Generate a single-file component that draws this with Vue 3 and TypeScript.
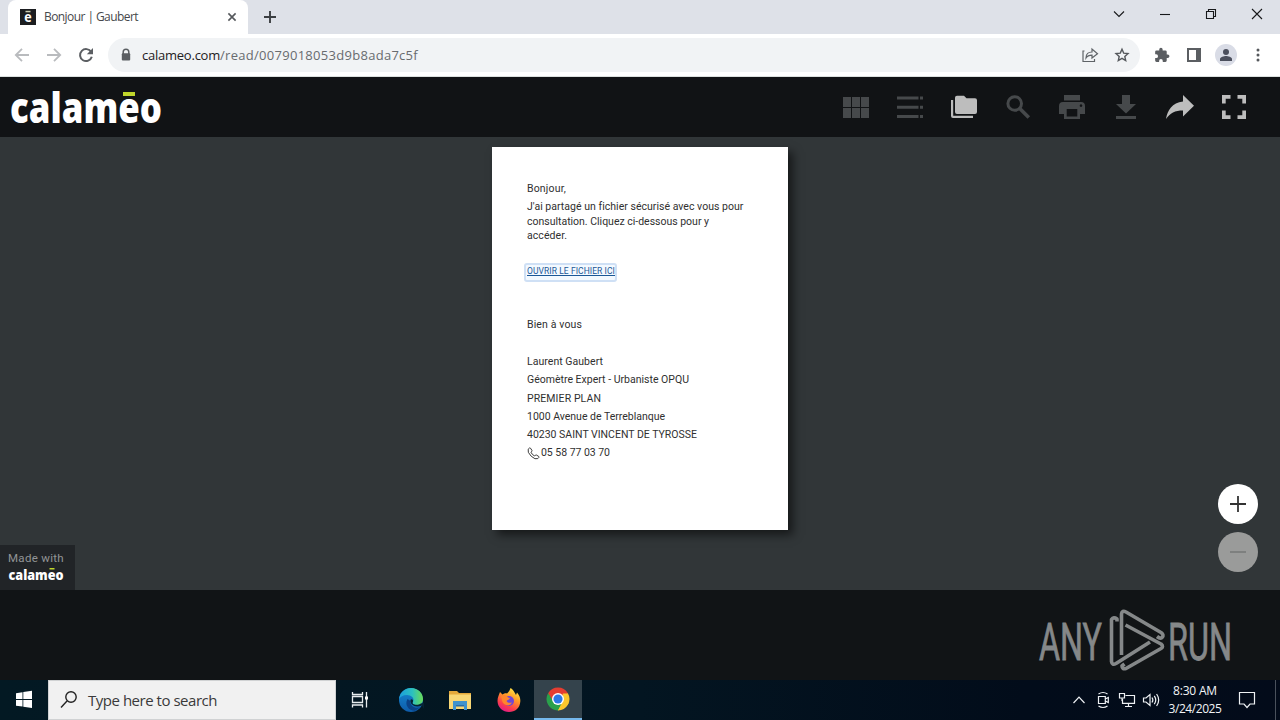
<script setup lang="ts">
import type { Directive } from 'vue'

/* Spreads the letters of a one-line label over the given width in pixels. */
const vFit: Directive<HTMLElement, number> = {
  mounted(el, binding) {
    const natural = el.getBoundingClientRect().width
    const count = (el.textContent ?? '').length
    el.style.letterSpacing = `${(binding.value - natural) / count}px`
  }
}

interface Line { text: string; width: number }

const intro: Line[] = [
  { text: "J'ai partagé un fichier sécurisé avec vous pour", width: 216 },
  { text: 'consultation. Cliquez ci-dessous pour y', width: 182 },
  { text: 'accéder.', width: 40 }
]

const signature: Line[] = [
  { text: 'Laurent Gaubert', width: 76 },
  { text: 'Géomètre Expert - Urbaniste OPQU', width: 162 },
  { text: 'PREMIER PLAN', width: 74 },
  { text: '1000 Avenue de Terreblanque', width: 138 },
  { text: '40230 SAINT VINCENT DE TYROSSE', width: 170 }
]
</script>

<template>
  <div class="screen">
    <header class="tabs">
      <div class="tab">
        <svg class="favicon" width="16" height="16" viewBox="0 0 16 16">
          <rect width="16" height="16" fill="#1b1d20" />
          <rect x="5.500" y="1.800" width="5" height="1.500" fill="#c9cbb0" />
          <text x="4.300" y="13" textLength="7.400" lengthAdjust="spacingAndGlyphs" font-size="14" font-weight="700" fill="#fff">e</text>
        </svg>
        <span class="tab-title"><span v-fit="94">Bonjour | Gaubert</span></span>
        <svg class="tab-close" width="16" height="16" viewBox="-8 -8 16 16"><path d="M-3.6-3.6 3.6 3.6M3.6-3.6-3.6 3.6" stroke="#55585c" stroke-width="1.6" /></svg>
      </div>
      <svg class="new-tab" width="28" height="34" viewBox="-14 -17 28 34"><path d="M-6 0H6M0-6V6" stroke="#3b3e42" stroke-width="1.900" /></svg>
      <div class="window-controls">
        <svg width="46" height="28" viewBox="-23 -14 46 28"><path d="M-5-2.500 0 2.500 5-2.500" /></svg>
        <svg width="46" height="28" viewBox="-23 -14 46 28"><path d="M-5 .5H5" /></svg>
        <svg width="46" height="28" viewBox="-23 -14 46 28"><path d="M-4.500-2.500h7v7h-7zM-2.500-2.500v-2h7v7h-2" /></svg>
        <svg width="46" height="28" viewBox="-23 -14 46 28"><path d="M-5-5 5 5M5-5-5 5" /></svg>
      </div>
    </header>

    <nav class="toolbar">
      <svg class="slot" viewBox="-16 -16 32 32"><path d="M7 0H-6M0-6.2-6.2 0 0 6.2" fill="none" stroke="#b9bbbe" stroke-width="1.8" /></svg>
      <svg class="slot" viewBox="-16 -16 32 32"><path d="M-7 0H6M0-6.2 6.2 0 0 6.2" fill="none" stroke="#b9bbbe" stroke-width="1.8" /></svg>
      <svg class="slot" viewBox="-16 -16 32 32"><path d="M5.2-3A6 6 0 1 0 5.8 1.8" fill="none" stroke="#5b5e62" stroke-width="2" /><path d="M7-7V-.8H.8z" fill="#5b5e62" /></svg>
      <div class="omnibox">
        <svg class="lock" width="16" height="16" viewBox="0 0 16 16"><path d="M5.200 7V5a2.800 2.800 0 0 1 5.600 0v2" fill="none" stroke="#5b5e62" stroke-width="1.500" /><rect x="3.800" y="6.200" width="8.400" height="7.400" rx="1" fill="#5b5e62" /></svg>
        <span class="url"><span v-fit="78" class="host">calameo.com</span><span v-fit="198">/read/0079018053d9b8ada7c5f</span></span>
        <svg class="slot" viewBox="-16 -16 32 32"><path d="M-5.500-4h-1.500V6.500H4.500V4M-4 3c0-4 2.500-6 6-6V-6L7.500-1.300 2 3V.2c-3 0-4.800.8-6 2.800z" fill="none" stroke="#5f6367" stroke-width="1.200" /></svg>
        <svg class="slot" viewBox="-16 -16 32 32"><path d="M0-5.800 1.700-1.900 6-1.500 2.800 1.400 3.700 5.500 0 3.300-3.700 5.500-2.800 1.400-6-1.500-1.700-1.900z" fill="none" stroke="#55585c" stroke-width="1.400" /></svg>
      </div>
      <svg class="slot ext" viewBox="-16 -16 32 32"><g transform="translate(-8.200 -8) scale(.68)"><path fill="#5b5e62" d="M20.500 11H19V7a2 2 0 0 0-2-2h-4V3.500a2.500 2.500 0 0 0-5 0V5H4a2 2 0 0 0-2 2v3.800h1.500a2.700 2.700 0 0 1 0 5.400H2V20a2 2 0 0 0 2 2h3.800v-1.500a2.700 2.700 0 0 1 5.400 0V22H17a2 2 0 0 0 2-2v-4h1.500a2.500 2.500 0 0 0 0-5z" /></g></svg>
      <svg class="slot" viewBox="-16 -16 32 32"><path fill="#5b5e62" fill-rule="evenodd" d="M-7-7H7V7H-7zM-5-5V5H2V-5z" /></svg>
      <svg class="slot" viewBox="-16 -16 32 32"><circle r="11" fill="#d9dce6" /><circle cy="-3" r="3" fill="#4b4f5d" /><path d="M-6 6V3.900C-6 1.800-2 .9 0 .9s6 .9 6 3V6z" fill="#4b4f5d" /></svg>
      <svg class="slot" viewBox="-16 -16 32 32" fill="#55585c"><circle cy="-5" r="1.500" /><circle r="1.500" /><circle cy="5" r="1.500" /></svg>
    </nav>

    <header class="reader-bar">
      <svg class="brand" width="160" height="60" viewBox="0 0 160 60">
        <text x="0" y="46" textLength="152" lengthAdjust="spacingAndGlyphs">calameo</text>
        <rect x="113" y="15" width="12" height="4" fill="#c0d62b" />
      </svg>
      <div class="reader-tools">
        <svg viewBox="-27 -16 54 32" class="dim"><path d="M-13-10h8v10h-8zM-4-10h8v10h-8zM5-10h8V0H5zM-13 1h8v10h-8zM-4 1h8v10h-8zM5 1h8v10H5z" /></svg>
        <svg viewBox="-27 -16 54 32" class="dim"><path d="M-13-10.500H8.500v3H-13zM10-10.500h3v3h-3zM-13-1.200H8.500v3H-13zM10-1.200h3v3h-3zM-13 8H8.500v3H-13zM10 8h3v3h-3z" /></svg>
        <svg viewBox="-27 -16 54 32"><path d="M-7-11.300H0l2.500 2.500h8.500a2 2 0 0 1 2 2V5a2 2 0 0 1-2 2H-7a2 2 0 0 1-2-2V-9.300a2 2 0 0 1 2-2zM-13-7h2.200V8.700H9V11h-20a2 2 0 0 1-2-2z" /></svg>
        <svg viewBox="-27 -16 54 32" class="dim"><circle cx="-3.300" cy="-3.500" r="6.800" fill="none" stroke="#46494b" stroke-width="3" /><path d="M1.800 1.600 10.800 10.600" stroke="#46494b" stroke-width="3.600" /></svg>
        <svg viewBox="-27 -16 54 32" class="dim"><path fill-rule="evenodd" d="M-8-12H8v5.500H-8zM-9-5H9a4 4 0 0 1 4 4V7H8v5H-8V7h-5v-8a4 4 0 0 1 4-4zM-5.300 2V9.500H5.300V2zM9-2.700a1.300 1.300 0 1 0 .01 0z" /></svg>
        <svg viewBox="-27 -16 54 32" class="dim"><path d="M-4-12H4v9h6L0 6.500-10-3h6zM-10 9h20v3h-20z" /></svg>
        <svg viewBox="-27 -16 54 32"><path d="M3-12 14-1.200 3 9.500V3.500C-5 3.500-10 6-14 12-12.500 3-8-4 3-5.500z" /></svg>
        <svg viewBox="-27 -16 54 32"><path d="M-12-12h8.500v3.700h-4.800V-3.500H-12zM3.500-12H12v8.500H8.300v-4.800H3.500zM-12 3.500h3.700v4.800h4.800V12H-12zM8.300 3.500H12V12H3.500V8.300h4.800z" /></svg>
      </div>
    </header>

    <main class="stage">
      <article class="page">
        <p class="hello"><span v-fit="39">Bonjour,</span></p>
        <p class="intro">
          <span v-for="line in intro" :key="line.text" class="row"><span v-fit="line.width">{{ line.text }}</span></span>
        </p>
        <a class="open-link"><span v-fit="88">OUVRIR LE FICHIER ICI</span></a>
        <p class="closing"><span v-fit="55">Bien à vous</span></p>
        <address class="signature">
          <span v-for="line in signature" :key="line.text" class="row"><span v-fit="line.width">{{ line.text }}</span></span>
          <span class="row phone">
            <svg width="13" height="13" viewBox="0 0 13 13"><path d="M1.200 2.200Q2.500.3 3.500 1.200L5 3.500Q5.200 4.500 3.900 5.200 5 7.600 7.600 9 8.600 7.500 9.400 8L11.800 9.500Q12.400 10.400 10.800 11.600 8.300 13 4.200 9.200 0 5 1.200 2.200z" fill="none" stroke="#3a3a3a" /></svg>
            <span v-fit="69">05 58 77 03 70</span>
          </span>
        </address>
      </article>

      <div class="made-with">
        <span class="made-label"><span v-fit="56">Made with</span></span>
        <svg width="60" height="22" viewBox="0 0 60 22"><text x="0.500" y="16" textLength="55" lengthAdjust="spacingAndGlyphs">calameo</text><rect x="41.500" y="4" width="5" height="1.500" fill="#c0d62b" /></svg>
      </div>

      <div class="zoom">
        <svg width="40" height="40" viewBox="-20 -20 40 40"><circle r="20" fill="#fff" /><path d="M-8 0H8M0-8V8" stroke="#333" stroke-width="1.800" /></svg>
        <svg width="40" height="40" viewBox="-20 -20 40 40"><circle r="20" fill="#9a9b9a" /><path d="M-8 0H8" stroke="#7b7d7c" stroke-width="1.800" /></svg>
      </div>
    </main>

    <footer class="below">
      <svg class="watermark" width="210" height="74" viewBox="0 0 210 74">
        <text x="5" y="53.500" textLength="63" lengthAdjust="spacingAndGlyphs">ANY</text>
        <text x="134" y="53.500" textLength="64" lengthAdjust="spacingAndGlyphs">RUN</text>
        <g fill="none" stroke="#858889" stroke-width="3.600" stroke-linejoin="round">
          <path d="M83 15.500V13Q79.500 10.500 77.500 13.500V55.500Q78 59.500 82 57.500L116 36" />
          <path d="M87.500 49V8Q88 4 92 6L127 26.500Q130.500 29 128 31.500 126 33 123 30.500" />
          <path d="M91.500 19 127 38Q130 40.500 127 42.500L92 62.500Q88 63.500 88 60L90.500 58" />
        </g>
      </svg>
    </footer>

    <footer class="taskbar">
      <svg width="48" height="40" viewBox="0 0 48 40"><path fill="#fff" d="M16 13.200 22.500 12.200V18.900H16zM23.300 12 32 10.800V18.900h-8.700zM16 20h6.500v6.600L16 25.700zM23.300 20H32v8l-8.700-1.200z" /></svg>
      <div class="search">
        <svg width="20" height="20" viewBox="0 0 20 20"><circle cx="11" cy="7" r="5.200" fill="none" stroke="#222" stroke-width="1.400" /><path d="M7 11 1 17.500" stroke="#222" stroke-width="1.400" /></svg>
        <span v-fit="129">Type here to search</span>
      </div>
      <svg class="task-view" width="48" height="40" viewBox="-24 -20 48 40" fill="none" stroke="#e7ecee" stroke-width="1.300"><path d="M-7.500-8v2.500h10V-8M-7.500-3.500h10v6h-10zM-7.500 7.500V5h10v2.500M6.500-8V7.500" /><path d="M5-3.500H8V-.5H5z" fill="#fff" stroke="none" /></svg>
      <div class="apps">
        <svg width="48" height="40" viewBox="-24 -20 48 40">
          <defs>
            <linearGradient id="edge-a" x1="0" x2="1"><stop stop-color="#1b9ddd" /><stop offset=".55" stop-color="#2bc0c0" /><stop offset="1" stop-color="#6bdc56" /></linearGradient>
            <linearGradient id="edge-b" x2="0" y2="1"><stop stop-color="#1689d2" /><stop offset="1" stop-color="#0e5ba9" /></linearGradient>
          </defs>
          <circle r="12" fill="url(#edge-b)" />
          <path d="M-12-1C-11-8-6-12 0-12 7-12 12-7 12-1 12 3 9 5 5.500 5 2 5 1 3.500 2 2 4-2 0-5-4-5-8-5-11-3-12-1z" fill="url(#edge-a)" />
          <path d="M-3.500-1C-7 5-2 11 4 10.800L9.500 7.300C4 9-1 6-.5 1z" fill="#0b4287" />
          <path d="M-.5 0C-1 5 4 8 11 5.500L13 9V3L10 3.500C8 5 5.500 5 3.500 4.500 1 4 1.500 2.500 2 1.500 2.500-.5 0-1.500-.5 0z" fill="#062333" />
        </svg>
        <svg width="48" height="40" viewBox="-24 -20 48 40">
          <path d="M-11-9h8l2 2h12V9h-22z" fill="#e4a93b" /><path d="M-11-5.500h22V9h-22z" fill="#f8d775" /><path d="M-7 1h14v9H4V6h-8v4h-3z" fill="#3f93cd" /><path d="M-4 5h8v1.500h-8z" fill="#2b6ca4" />
        </svg>
        <svg width="48" height="40" viewBox="-24 -20 48 40">
          <defs><linearGradient id="fox" x1=".8" y1="0" x2=".3" y2="1"><stop stop-color="#fff04a" /><stop offset=".4" stop-color="#ff9b27" /><stop offset=".75" stop-color="#fc3e4c" /><stop offset="1" stop-color="#e3198a" /></linearGradient></defs>
          <path d="M-9-8-6.500-5.500C-5-6.500-3-7-2-6.500 0-8 1-10.500 1.500-12 5-10 6-6.500 7-5L8-7.500C11-4 11.500-1 11.300 1.500 11 8 6 12 0 12S-11.400 7.500-11.500 1C-11.500-3-10-5-9-8z" fill="url(#fox)" />
          <circle cx="0" cy="1" r="5" fill="#6e46d7" /><path d="M-8-4C-5-6-2-5-1-2.500L1-2C.5-.5-1.500 0-2.500 1-1.500 3 1 3 3 2.500 1.500 6-4 6.500-6.500 2z" fill="#ff862c" />
        </svg>
        <svg class="active" width="48" height="40" viewBox="-24 -20 48 40">
          <path d="M0 0-10.400-6A12 12 0 0 1 10.400-6z" fill="#e43d31" /><path d="M0 0V12A12 12 0 0 1-10.400-6z" fill="#2aa04b" /><path d="M0 0 10.400-6A12 12 0 0 1 0 12z" fill="#fcc72d" />
          <path d="M0-5.800H10.400L5 2.800zM-5 2.800-10.400-6-3-6z" fill="#e43d31" /><path d="M-10.400-6-5 2.900 0 5.800 5 2.900 0 12-7 8z" fill="#2aa04b" /><path d="M5-5.800h5.400L11 5 0 12 5 2.900z" fill="#fcc72d" />
          <circle r="6.300" fill="#fff" /><circle r="4.800" fill="#2c78e6" />
        </svg>
      </div>
      <div class="tray">
        <svg width="24" height="40" viewBox="-12 -20 24 40"><path d="M-5.500 3 0-2.800 5.500 3" /></svg>
        <svg width="24" height="40" viewBox="-12 -20 24 40"><path d="M-4.500-3.500h6.800v7h-6.800zM2.300-1l3-1.500v5L2.300 1M-4.500-6Q0-9 4.500-6M-4.500 6Q0 9 4.500 6" /></svg>
        <svg width="24" height="40" viewBox="-12 -20 24 40"><path d="M-1.500-4.500h9v7.800H-4.500V-1M1.500 3.500v3M-2 6.500h7M-7.500-6.500h5v4.500h-5zM-5-2v3" /></svg>
        <svg width="24" height="40" viewBox="-12 -20 24 40"><path d="M-7.500-2h2.500l4-3.500v11L-5 2h-2.500zM1-2.500Q2.700 0 1 2.500M3.300-4.200Q6.200 0 3.300 4.200M5.600-6Q9.800 0 5.600 6" /></svg>
        <div class="clock"><span class="row"><span v-fit="44">8:30 AM</span></span><span class="row"><span v-fit="53">3/24/2025</span></span></div>
        <svg width="40" height="40" viewBox="-20 -20 40 40"><path d="M-7.500-7.500h15V4H3L0 7.500-3 4h-4.500z" /></svg>
        <i class="peek"></i>
      </div>
    </footer>
  </div>
</template>

<style>
html, body { margin: 0; overflow: hidden; }
</style>

<style scoped>
* { box-sizing: border-box; }
.screen { width: 1280px; height: 720px; display: flex; flex-direction: column; overflow: hidden; font-family: "Open Sans", "Noto Sans", sans-serif; background: #111315; }
svg { display: block; flex: none; }
p { margin: 0; }
span { white-space: nowrap; }
.row { display: block; }

.tabs { height: 34px; flex: none; display: flex; background: #dee1e8; }
.tab { width: 240px; height: 34px; margin-left: 8px; padding: 0 8px 0 12px; display: flex; align-items: center; background: #fff; border-radius: 8px 8px 0 0; }
.favicon text { font-family: "Open Sans", sans-serif; }
.tab-title { flex: 1; margin-left: 8px; font-size: 12px; line-height: 18px; color: #46484b; }
.new-tab { margin-left: 8px; }
.window-controls { margin-left: auto; display: flex; }
.window-controls path { fill: none; stroke: #17181a; stroke-width: 1.1; }

.toolbar { height: 43px; flex: none; padding: 0 6px 1px; display: flex; align-items: center; background: #fff; border-bottom: 1px solid #dce1df; }
.slot { width: 32px; height: 32px; }
.omnibox { flex: 1; height: 34px; margin-left: 6px; padding: 0 2px 0 10px; border-radius: 17px; display: flex; align-items: center; background: #f1f3f5; }
.url { flex: 1; display: flex; margin-left: 8px; font-size: 13px; line-height: 20px; color: #686b6f; }
.host { color: #1e2023; }
.ext { margin-left: 6px; }

.reader-bar { height: 60px; flex: none; padding: 0 19px 0 10px; display: flex; align-items: center; justify-content: space-between; background: #111315; }
.brand text { font: 800 42px "Open Sans", sans-serif; fill: #fff; }
.reader-tools { display: flex; }
.reader-tools svg { width: 54px; height: 32px; fill: #bdbdbd; }
.reader-tools .dim { fill: #46494b; }

.stage { position: relative; height: 453px; flex: none; display: flex; justify-content: center; padding-top: 10px; background: #313638; }
.page { width: 296px; height: 383px; padding: 34px 35px 0; background: #fff; box-shadow: 5px 5px 9px rgba(0, 0, 0, .55); color: #303030; font-family: Roboto, sans-serif; font-size: 10.5px; }
.hello { line-height: 15px; }
.intro { margin-top: 4px; line-height: 14.7px; }
.open-link { display: block; width: 93px; height: 19px; margin: 19px 0 0 -3px; padding-left: 1px; border: 2px solid #cfe0f5; border-radius: 3px; background: #f3f9ff; font-size: 8.5px; line-height: 12px; color: #1b5796; text-decoration: underline; }
.closing { margin-top: 35px; line-height: 15px; }
.signature { margin-top: 21px; line-height: 18.2px; font-style: normal; }
.phone { display: flex; align-items: center; }
.phone span { margin-left: 1px; }

.made-with { position: absolute; left: 0; bottom: 0; width: 75px; height: 45px; padding: 6px 0 0 8px; background: #212427; }
.made-label { display: block; font: 11.5px/15px Roboto, sans-serif; color: #929496; }
.made-with svg { margin-top: -2px; }
.made-with text { font: 800 14px "Open Sans", sans-serif; fill: #fff; }
.zoom { position: absolute; right: 22px; bottom: 18px; display: grid; gap: 8px; }

.below { height: 90px; flex: none; display: flex; justify-content: flex-end; padding: 16px 36px 0 0; background: #111416; }
.watermark text { font: 400 52px Roboto, sans-serif; fill: #858889; stroke: #858889; stroke-width: .8; }

.taskbar { height: 40px; flex: none; display: flex; background: linear-gradient(90deg, #031923, #031521 50%, #020c1a 80%, #030b1a); }
.search { width: 288px; height: 40px; padding-left: 11px; display: flex; align-items: center; gap: 8px; background: #f1f1f1; border: 1px solid #d0d2d3; font-size: 15px; color: #3a3a3a; }
.apps { margin-left: 3px; display: flex; gap: 1px; }
.active { background: #34434c; border-bottom: 2px solid #76b9ed; }
.tray { margin-left: auto; display: flex; color: #f2f4f6; }
.tray path { fill: none; stroke: #eef1f4; stroke-width: 1.2; }
.clock { width: 64px; padding-top: 2px; text-align: center; font-size: 12px; line-height: 18px; }
.peek { width: 1px; height: 40px; margin: 0 4px 0 8px; background: #4a515c; }
</style>
